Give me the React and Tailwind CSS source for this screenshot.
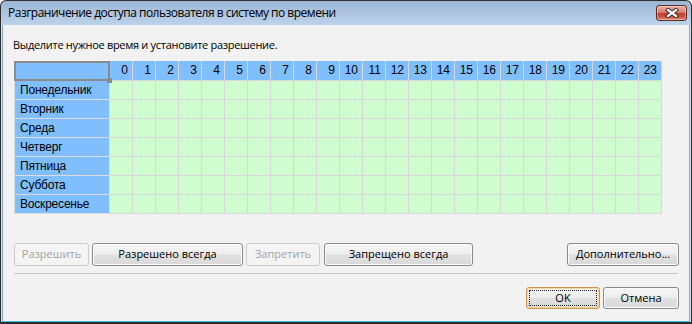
import React from 'react'

const hours = Array.from({ length: 24 }, (_, i) => i)
const days = ['Понедельник', 'Вторник', 'Среда', 'Четверг', 'Пятница', 'Суббота', 'Воскресенье']

function CloseButton() {
  return (
    <div className="w-[31px] h-[16px] rounded-[3px] border border-[#5e2a24] bg-[linear-gradient(#e9b0a4_0%,#d98272_45%,#c2412e_52%,#c9503c_75%,#dd8a76_100%)] flex items-center justify-center shadow-[inset_0_0_0_1px_rgba(255,255,255,0.35)]">
      <svg width="14" height="10" viewBox="0 0 14 10">
        <path d="M3 2 L11 8 M11 2 L3 8" stroke="#3d2a2a" strokeWidth="4.2" strokeLinecap="square" />
        <path d="M3 2 L11 8 M11 2 L3 8" stroke="#ffffff" strokeWidth="2.2" strokeLinecap="square" />
      </svg>
    </div>
  )
}

function Button({ children, w, disabled, focused }) {
  if (disabled) {
    return (
      <div className={`${w} h-[23px] rounded-[3px] border border-[#cdcdcd] bg-[#f4f4f4] text-[#a3a3a3] flex items-center justify-center`}>
        {children}
      </div>
    )
  }
  return (
    <div
      className={`${w} rounded-[3px] border ${
        focused
          ? 'h-[22px] border-[#c8954a] outline-1 outline-dotted outline-[#222] outline-offset-[-4px] shadow-[inset_0_0_0_1px_#f6d9a6]'
          : 'h-[23px] border-[#8a8a8a] shadow-[inset_0_0_0_1px_#fbfbfb]'
      } bg-[linear-gradient(#f5f5f5_0%,#ededed_48%,#e0e0e0_52%,#d9d9d9_100%)] text-black flex items-center justify-center`}
    >
      {children}
    </div>
  )
}

export default function App() {
  return (
    <div className="w-[692px] h-[324px] bg-[#2e2e2e] rounded-t-[6px] pt-px px-px pb-[2px] flex flex-col font-['Open_Sans',sans-serif] text-[11px] text-black">
      <div className="h-[24px] shrink-0 rounded-t-[5px] bg-[linear-gradient(#9bb5d3,#bdd3eb)] flex items-center justify-between pl-[7px] pr-[4px]">
        <span className="text-[12px] leading-[16px] tracking-[-0.5px]">Разграничение доступа пользователя в систему по времени</span>
        <CloseButton />
      </div>

      <div className="flex-1 flex bg-[#d2e3f4] px-px">
        <div className="flex-1 flex flex-col bg-[#f2f2f2] border-x border-b border-x-[#88a9cf] border-b-[#3ec2e8] pl-[11px] pr-[10px]">
          <div className="mt-[12px] -ml-px leading-[16px] tracking-[-0.3px]">
            Выделите нужное время и установите разрешение.
          </div>

          <div className="mt-[8px] flex flex-col font-['Liberation_Sans',Arial,sans-serif] text-[12px]">
            <div className="flex h-[20px]">
              <div className="relative w-[96px] h-[20px] border-2 border-[#8a8a8a] bg-[#80bfff]">
                <div className="absolute right-[-4px] bottom-[-4px] w-[5px] h-[5px] bg-[#8a8a8a]" />
              </div>
              {hours.map((h) => (
                <div
                  key={h}
                  className="w-[23px] h-[20px] border-r border-b border-[#d8d8d8] bg-[#80bfff] text-right pr-[4px] leading-[19px]"
                >
                  {h}
                </div>
              ))}
            </div>
            {days.map((d) => (
              <div key={d} className="flex h-[19px]">
                <div className="w-[96px] h-[19px] border-l border-r border-b border-[#dcdcdc] bg-[#80bfff] pl-[5px] leading-[18px] tracking-[-0.2px]">
                  {d}
                </div>
                {hours.map((h) => (
                  <div key={h} className="w-[23px] h-[19px] border-r border-b border-[#d8d8d8] bg-[#d0fdd0]" />
                ))}
              </div>
            ))}
          </div>

          <div className="mt-[29px] flex items-center">
            <div className="flex gap-[3px]">
              <Button w="w-[75px]" disabled>Разрешить</Button>
              <Button w="w-[151px]">Разрешено всегда</Button>
              <Button w="w-[74px]" disabled>Запретить</Button>
              <div className="ml-px">
                <Button w="w-[149px]">Запрещено всегда</Button>
              </div>
            </div>
            <div className="ml-auto">
              <Button w="w-[112px]">Дополнительно...</Button>
            </div>
          </div>

          <div className="mt-[7px] w-[664px] h-px bg-[#c8c8c8]" />

          <div className="mt-[13px] flex justify-end gap-[3px]">
            <Button w="w-[74px]" focused>OK</Button>
            <div className="h-[22px] flex">
              <div className="w-[76px] h-[22px] rounded-[3px] border border-[#8a8a8a] shadow-[inset_0_0_0_1px_#fbfbfb] bg-[linear-gradient(#f5f5f5_0%,#ededed_48%,#e0e0e0_52%,#d9d9d9_100%)] flex items-center justify-center">
                Отмена
              </div>
            </div>
          </div>
        </div>
      </div>
    </div>
  )
}
